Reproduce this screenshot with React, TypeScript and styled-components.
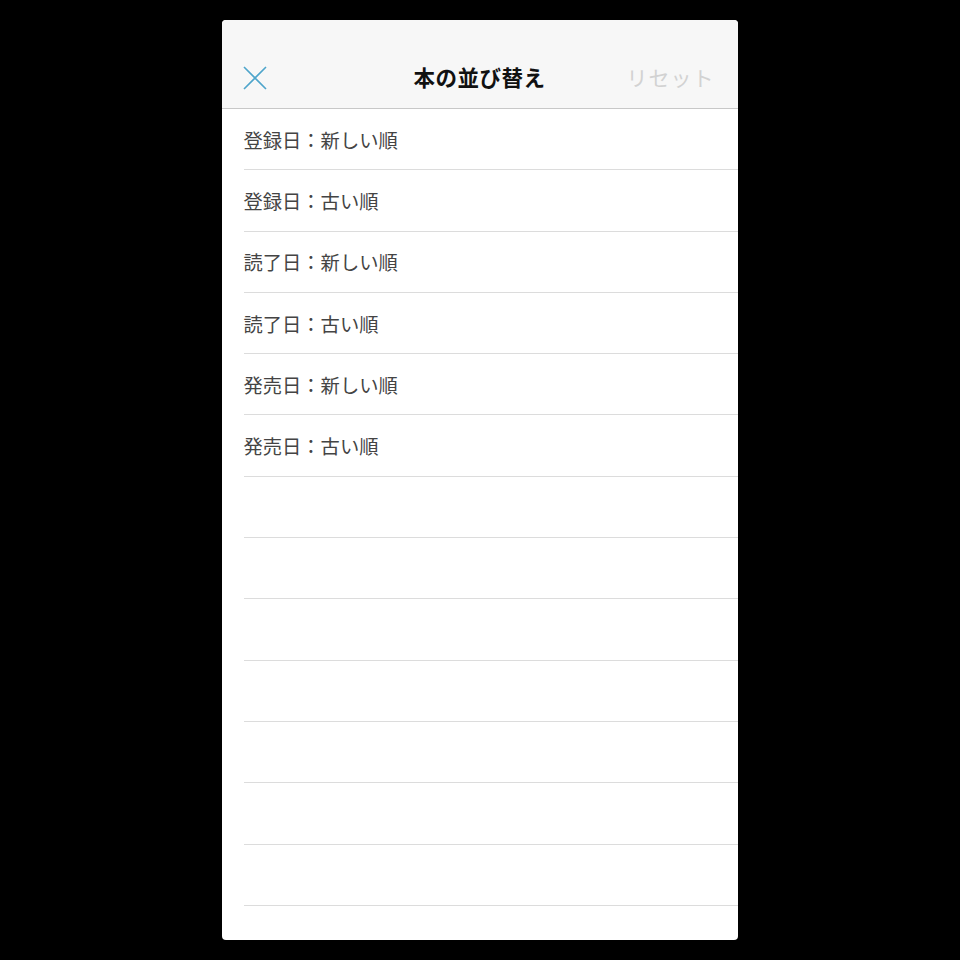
import * as React from "react";
import styled, { createGlobalStyle } from "styled-components";

const GlobalStyle = createGlobalStyle`
  html, body {
    margin: 0;
    padding: 0;
    background: #000;
  }
  body {
    font-family: "Noto Sans CJK JP", "Noto Sans", sans-serif;
  }
`;

const Screen = styled.div`
  width: 960px;
  height: 960px;
  background: #000;
  display: flex;
  justify-content: center;
  padding-top: 20px;
  box-sizing: border-box;
`;

const Sheet = styled.div`
  width: 516px;
  height: 920px;
  margin-left: -1px;
  background: #fff;
  border-radius: 4px;
  overflow: hidden;
  display: flex;
  flex-direction: column;
`;

const Header = styled.div`
  height: 89px;
  box-sizing: border-box;
  padding-top: 25px;
  background: #f7f7f7;
  border-bottom: 1px solid #c8c8c8;
  display: grid;
  grid-template-columns: 1fr auto 1fr;
  align-items: center;
  flex-shrink: 0;
`;

const CloseButton = styled.button`
  justify-self: start;
  margin-left: 21px;
  margin-top: 2px;
  width: 24px;
  height: 24px;
  padding: 0;
  border: none;
  background: none;
  display: flex;
`;

const Title = styled.div`
  font-size: 21.5px;
  font-weight: 700;
  color: #111;
  letter-spacing: 0.5px;
`;

const ResetButton = styled.div`
  justify-self: end;
  margin-right: 23px;
  font-size: 21px;
  color: #d2d2d2;
  letter-spacing: 1px;
`;

const List = styled.ul`
  list-style: none;
  margin: 0;
  padding: 0 0 0 22px;
`;

const Row = styled.li`
  height: 61.3px;
  box-sizing: border-box;
  border-bottom: 1px solid #dcdcdc;
  display: flex;
  align-items: center;
  font-size: 19.3px;
  color: #444;
  padding-top: 1px;
`;

const options = [
  "登録日：新しい順",
  "登録日：古い順",
  "読了日：新しい順",
  "読了日：古い順",
  "発売日：新しい順",
  "発売日：古い順",
  "",
  "",
  "",
  "",
  "",
  "",
  "",
];

const CloseIcon = () => (
  <svg width="24" height="24" viewBox="0 0 24 24">
    <path
      d="M1 1 L23 23 M23 1 L1 23"
      stroke="#4ea5cb"
      strokeWidth="1.6"
      fill="none"
    />
  </svg>
);

const App = () => {
  return (
    <>
      <GlobalStyle />
      <Screen>
        <Sheet>
          <Header>
            <CloseButton>
              <CloseIcon />
            </CloseButton>
            <Title>本の並び替え</Title>
            <ResetButton>リセット</ResetButton>
          </Header>
          <List>
            {options.map((label, i) => (
              <Row key={i}>{label}</Row>
            ))}
          </List>
        </Sheet>
      </Screen>
    </>
  );
};

export default App;
